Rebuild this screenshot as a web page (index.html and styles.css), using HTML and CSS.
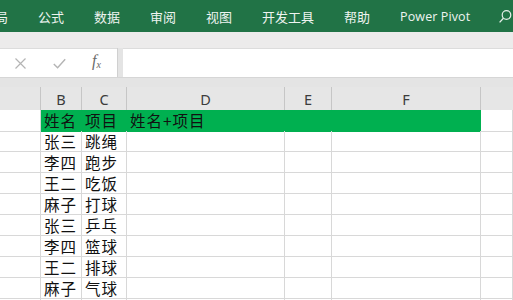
FILE: index.html
```html
<!DOCTYPE html>
<html lang="zh-CN">
<head>
<meta charset="utf-8">
<title>Excel</title>
<link rel="stylesheet" href="styles.css">
</head>
<body>
<div class="app">
  <div class="ribbon">
    <span class="tab first">局</span>
    <span class="tab">公式</span>
    <span class="tab">数据</span>
    <span class="tab">审阅</span>
    <span class="tab">视图</span>
    <span class="tab">开发工具</span>
    <span class="tab">帮助</span>
    <span class="tab latin">Power Pivot</span>
    <svg class="search" width="14" height="16" viewBox="0 0 14 16"><circle cx="7.5" cy="6" r="4.3" fill="none" stroke="#e6efe9" stroke-width="1.2"/><line x1="4.4" y1="9.2" x2="0.6" y2="13.4" stroke="#e6efe9" stroke-width="1.3"/></svg>
  </div>
  <div class="strip"></div>
  <div class="formula">
    <div class="fbtns">
      <svg class="ficon" width="13" height="13" viewBox="0 0 13 13"><path d="M1.5 1.5 L11.5 11.5 M11.5 1.5 L1.5 11.5" stroke="#b4b4b4" stroke-width="1.2" fill="none"/></svg>
      <svg class="ficon" width="13" height="13" viewBox="0 0 13 13"><path d="M0.8 7 L4.6 10.8 L12.2 2.2" stroke="#b4b4b4" stroke-width="1.4" fill="none"/></svg>
      <span class="fx">f<sub>x</sub></span>
    </div>
    <div class="fsep"></div>
    <div class="finput"></div>
  </div>
  <div class="gap"></div>
  <div class="sheet">
    <div class="row head">
      <div class="c"></div><div class="c">B</div><div class="c">C</div><div class="c">D</div><div class="c">E</div><div class="c">F</div><div class="c last"></div>
    </div>
    <div class="row title">
      <div class="c"></div><div class="c g">姓名</div><div class="c g">项目</div><div class="c g">姓名+项目</div><div class="c g"></div><div class="c g"></div><div class="c"></div>
    </div>
    <div class="row"><div class="c"></div><div class="c">张三</div><div class="c">跳绳</div><div class="c"></div><div class="c"></div><div class="c"></div><div class="c"></div></div>
    <div class="row"><div class="c"></div><div class="c">李四</div><div class="c">跑步</div><div class="c"></div><div class="c"></div><div class="c"></div><div class="c"></div></div>
    <div class="row"><div class="c"></div><div class="c">王二</div><div class="c">吃饭</div><div class="c"></div><div class="c"></div><div class="c"></div><div class="c"></div></div>
    <div class="row"><div class="c"></div><div class="c">麻子</div><div class="c">打球</div><div class="c"></div><div class="c"></div><div class="c"></div><div class="c"></div></div>
    <div class="row"><div class="c"></div><div class="c">张三</div><div class="c">乒乓</div><div class="c"></div><div class="c"></div><div class="c"></div><div class="c"></div></div>
    <div class="row"><div class="c"></div><div class="c">李四</div><div class="c">篮球</div><div class="c"></div><div class="c"></div><div class="c"></div><div class="c"></div></div>
    <div class="row"><div class="c"></div><div class="c">王二</div><div class="c">排球</div><div class="c"></div><div class="c"></div><div class="c"></div><div class="c"></div></div>
    <div class="row"><div class="c"></div><div class="c">麻子</div><div class="c">气球</div><div class="c"></div><div class="c"></div><div class="c"></div><div class="c"></div></div>
    <div class="row"><div class="c"></div><div class="c"></div><div class="c"></div><div class="c"></div><div class="c"></div><div class="c"></div><div class="c"></div></div>
  </div>
</div>
</body>
</html>
```
FILE: styles.css
```css
* { box-sizing: border-box; }
html, body { margin: 0; padding: 0; background: #fff; }
.app {
  width: 513px;
  height: 300px;
  overflow: hidden;
  font-family: "Noto Sans", "Noto Sans CJK SC", sans-serif;
}
.ribbon {
  height: 32px;
  background: #217346;
  display: flex;
  align-items: center;
  gap: 30px;
  padding-top: 2px;
  overflow: hidden;
  white-space: nowrap;
}
.tab {
  flex-shrink: 0;
  color: #eef4f0;
  font-family: "Noto Sans CJK SC", sans-serif;
  font-size: 13px;
  line-height: 16px;
}
.tab.first { margin-left: -5px; }
.tab.latin {
  font-family: "Open Sans", "Noto Sans", sans-serif;
  font-size: 12.5px;
  letter-spacing: 0.1px;
}
.search { flex-shrink: 0; margin-left: -1px; }
.strip { height: 16px; background: #ecebeb; }
.formula {
  height: 29px;
  display: flex;
  background: #e4e4e4;
}
.fbtns {
  width: 117px;
  background: #fff;
  display: flex;
  align-items: center;
  gap: 26px;
  padding-left: 14px;
  border-top: 1px solid #dcdcdc;
}
.ficon { flex-shrink: 0; }
.fx {
  width: 14px;
  font-family: "Liberation Serif", serif;
  font-style: italic;
  font-size: 16px;
  color: #6a6a6a;
  line-height: 14px;
}
.fx sub { font-size: 10px; vertical-align: -2px; }
.fsep { width: 6px; border-left: 1px solid #d0d0d0; }
.finput { flex: 1; background: #fff; border-top: 1px solid #dcdcdc; }
.gap { height: 10px; background: #e4e4e4; border-top: 1px solid #d6d6d6; }
.row {
  display: grid;
  grid-template-columns: 41px 41px 45px 158px 47px 149px 1fr;
  height: 21px;
}
.c {
  border-right: 1px solid #d8d8d8;
  border-bottom: 1px solid #d8d8d8;
  padding-left: 3px;
  font-family: "Noto Sans CJK SC", sans-serif;
  font-size: 15.5px;
  letter-spacing: 1px;
  line-height: 20px;
  color: #111;
  white-space: nowrap;
}
.head { height: 23px; background: #e6e6e6; }
.head .c {
  border-right: 1px solid #c6c6c6;
  border-bottom: none;
  padding: 0;
  padding-top: 2px;
  text-align: center;
  font-family: "Noto Sans", sans-serif;
  font-size: 14.5px;
  letter-spacing: 0;
  line-height: 20px;
  color: #3c3c3c;
}
.head .c.last { border-right: none; }
.title .c { line-height: 21px; }
.title .c.g {
  background: #00b050;
  border-right-color: #00b050;
  border-bottom-color: #00b050;
  color: #111;
}
```
